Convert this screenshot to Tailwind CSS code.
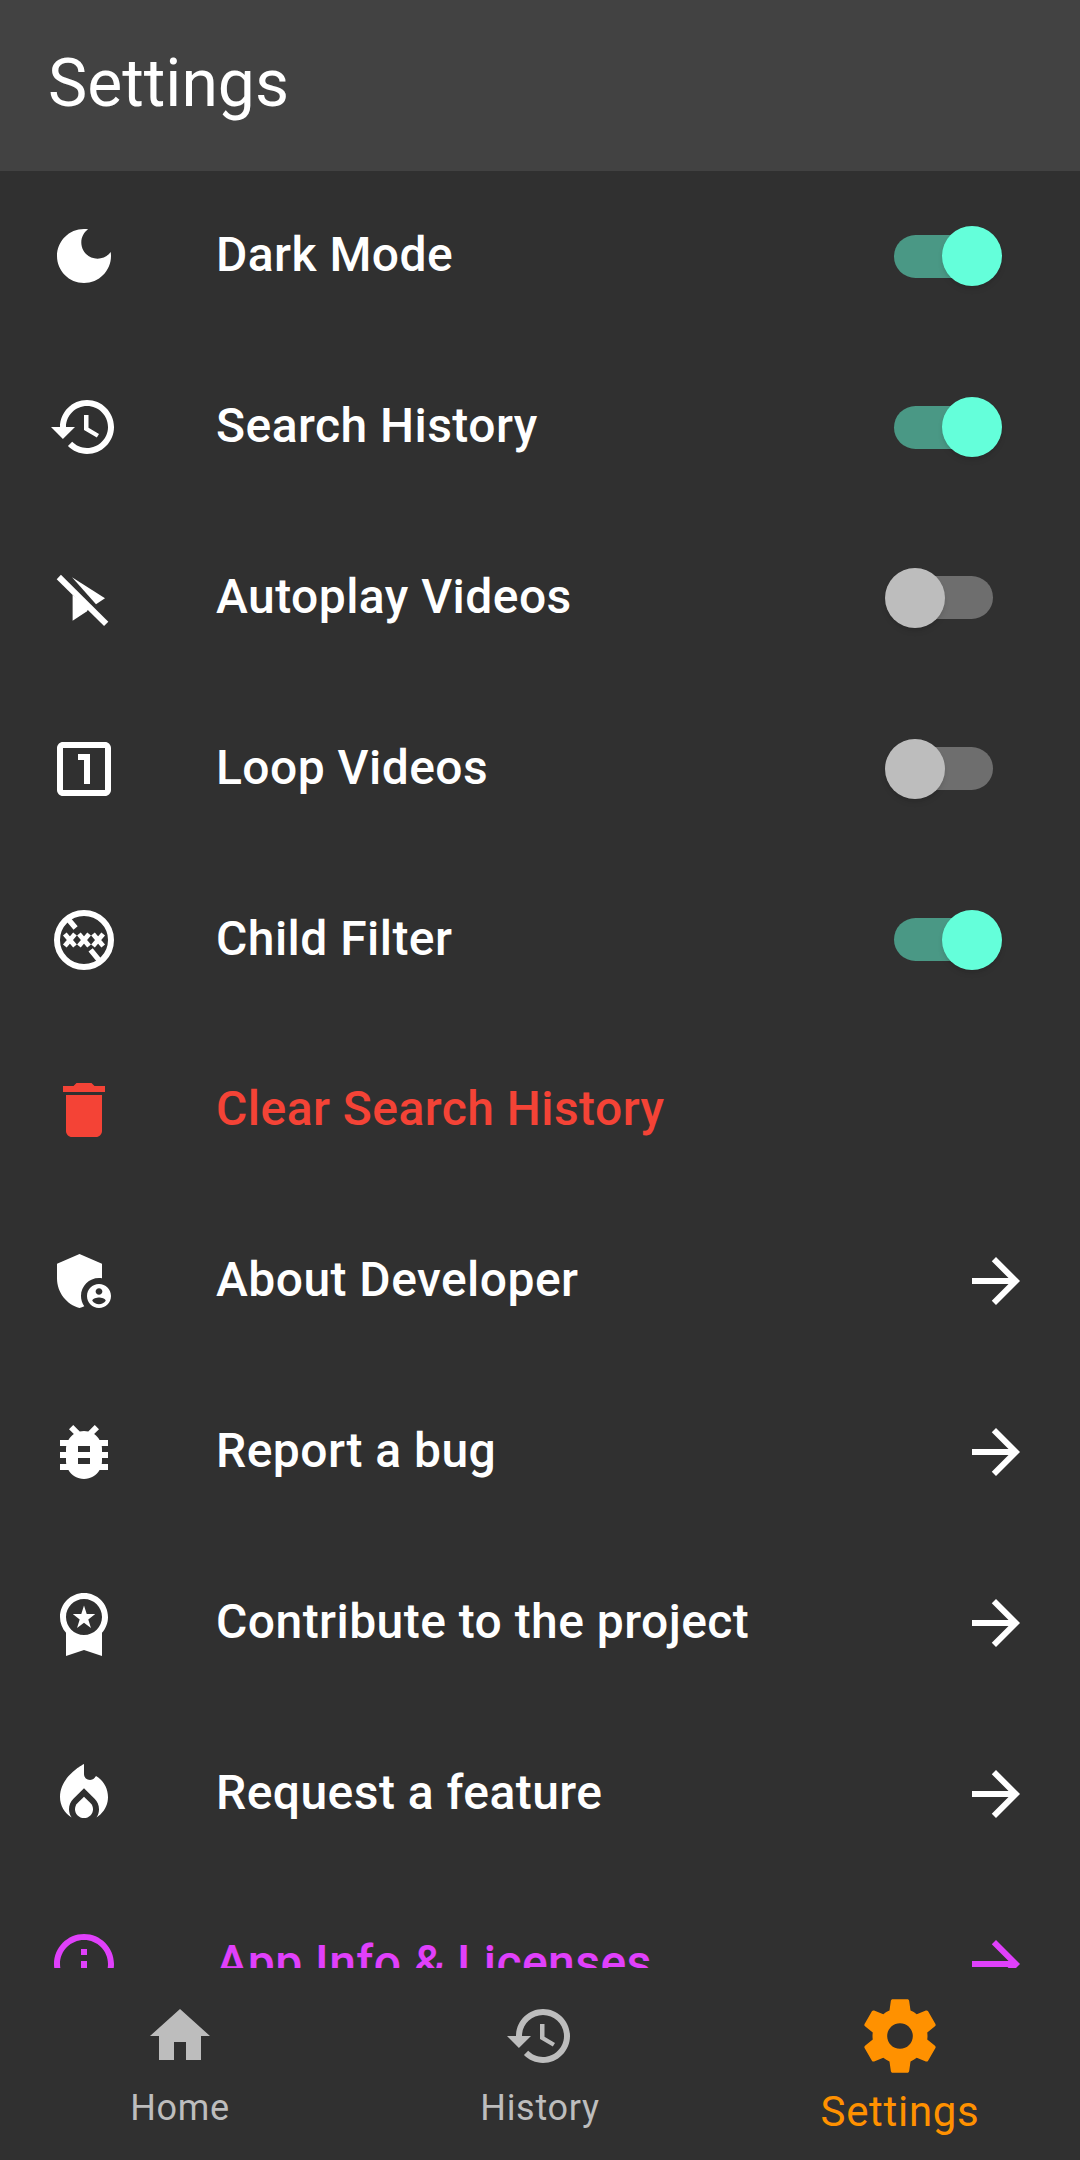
<!DOCTYPE html>
<html>
  <head>
    <meta charset="utf-8" />
    <title>Settings</title>
    <script src="https://cdn.jsdelivr.net/npm/@tailwindcss/browser@4"></script>
  </head>
  <body>
    <div class="w-[1080px] h-[2160px] flex flex-col bg-[#303030] overflow-hidden font-['Roboto',sans-serif] text-white">
      <header class="h-[171px] shrink-0 bg-[#424242] flex items-center pl-12">
        <h1 class="text-[66px] font-normal leading-none pb-[4px]">Settings</h1>
      </header>

      <main class="h-[1797px] shrink-0 overflow-hidden">
        <div class="h-[170.8px] flex items-center pl-12">
          <svg class="w-[72px] h-[72px] shrink-0" viewBox="0 0 24 24" fill="currentColor"><path d="M12 3c-4.97 0-9 4.03-9 9s4.03 9 9 9 9-4.03 9-9c0-.46-.04-.92-.1-1.36-.98 1.37-2.58 2.26-4.4 2.26-2.98 0-5.4-2.42-5.4-5.4 0-1.81.89-3.42 2.26-4.4-.44-.06-.9-.1-1.36-.1z"/></svg>
          <span class="ml-24 text-[48px] font-medium leading-none tracking-[0.45px] pb-[2px]">Dark Mode</span>
          <div class="relative ml-auto mr-[87px] w-[99px] h-[43px] rounded-full bg-[#64ffda]/50">
            <div class="absolute -right-[9px] -top-[8.5px] w-[60px] h-[60px] rounded-full bg-[#64ffda] shadow-md"></div>
          </div>
        </div>

        <div class="h-[170.8px] flex items-center pl-12">
          <svg class="w-[72px] h-[72px] shrink-0" viewBox="0 0 24 24" fill="currentColor"><path d="M13 3c-4.97 0-9 4.03-9 9H1l3.89 3.89.07.14L9 12H6c0-3.87 3.13-7 7-7s7 3.13 7 7-3.13 7-7 7c-1.93 0-3.68-.79-4.94-2.06l-1.42 1.42C8.27 19.99 10.51 21 13 21c4.97 0 9-4.03 9-9s-4.03-9-9-9zm-1 5v5l4.28 2.54.72-1.21-3.5-2.08V8H12z"/></svg>
          <span class="ml-24 text-[48px] font-medium leading-none tracking-[0.45px] pb-[2px]">Search History</span>
          <div class="relative ml-auto mr-[87px] w-[99px] h-[43px] rounded-full bg-[#64ffda]/50">
            <div class="absolute -right-[9px] -top-[8.5px] w-[60px] h-[60px] rounded-full bg-[#64ffda] shadow-md"></div>
          </div>
        </div>

        <div class="h-[170.8px] flex items-center pl-12">
          <svg class="w-[72px] h-[72px] shrink-0" viewBox="0 0 24 24" fill="currentColor"><path d="M8 5.1 19 12.1 16 14.1Z"/><path d="M8.2 10.9V19.6L12.9 16.5 13.7 15.4Z"/><path d="M3.6 5 19.4 20.6" stroke="currentColor" stroke-width="2" fill="none"/></svg>
          <span class="ml-24 text-[48px] font-medium leading-none tracking-[0.45px] pb-[2px]">Autoplay Videos</span>
          <div class="relative ml-auto mr-[87px] w-[99px] h-[43px] rounded-full bg-white/30">
            <div class="absolute -left-[9px] -top-[8.5px] w-[60px] h-[60px] rounded-full bg-[#bdbdbd] shadow-md"></div>
          </div>
        </div>

        <div class="h-[170.8px] flex items-center pl-12">
          <svg class="w-[72px] h-[72px] shrink-0" viewBox="0 0 24 24" fill="currentColor"><path d="M19 3H5c-1.1 0-2 .9-2 2v14c0 1.1.9 2 2 2h14c1.1 0 2-.9 2-2V5c0-1.1-.9-2-2-2zm0 16H5V5h14v14zM12 17h2V7h-4v2h2z"/></svg>
          <span class="ml-24 text-[48px] font-medium leading-none tracking-[0.45px] pb-[2px]">Loop Videos</span>
          <div class="relative ml-auto mr-[87px] w-[99px] h-[43px] rounded-full bg-white/30">
            <div class="absolute -left-[9px] -top-[8.5px] w-[60px] h-[60px] rounded-full bg-[#bdbdbd] shadow-md"></div>
          </div>
        </div>

        <div class="h-[170.8px] flex items-center pl-12">
          <svg class="w-[72px] h-[72px] shrink-0" viewBox="0 0 24 24" fill="none" stroke="currentColor"><circle cx="12" cy="12" r="9" stroke-width="2"/><path d="M6.4 4.7 9.2 8M14.2 15.3 17 18.7" stroke-width="1.8"/><path d="M5.6 10 9 14M9 10 5.6 14M10.3 10 13.7 14M13.7 10 10.3 14M15 10 18.4 14M18.4 10 15 14" stroke-width="1.6"/></svg>
          <span class="ml-24 text-[48px] font-medium leading-none tracking-[0.45px] pb-[2px]">Child Filter</span>
          <div class="relative ml-auto mr-[87px] w-[99px] h-[43px] rounded-full bg-[#64ffda]/50">
            <div class="absolute -right-[9px] -top-[8.5px] w-[60px] h-[60px] rounded-full bg-[#64ffda] shadow-md"></div>
          </div>
        </div>

        <div class="h-[170.8px] flex items-center pl-12 text-[#f44336]">
          <svg class="w-[72px] h-[72px] shrink-0" viewBox="0 0 24 24" fill="currentColor"><path d="M6 19c0 1.1.9 2 2 2h8c1.1 0 2-.9 2-2V7H6v12zM19 4h-3.5l-1-1h-5l-1 1H5v2h14V4z"/></svg>
          <span class="ml-24 text-[48px] font-medium leading-none tracking-[0.45px] pb-[2px]">Clear Search History</span>
        </div>

        <div class="h-[170.8px] flex items-center pl-12">
          <svg class="w-[72px] h-[72px] shrink-0" viewBox="0 0 24 24" fill="currentColor"><path d="M17 11c.34 0 .67.04 1 .09V6.27L10.5 3 3 6.27v4.91c0 4.54 3.2 8.79 7.5 9.82.55-.13 1.08-.32 1.6-.55-.69-.98-1.1-2.17-1.1-3.45 0-3.31 2.69-6 6-6z"/><path d="M17 13c-2.21 0-4 1.79-4 4s1.79 4 4 4 4-1.79 4-4-1.79-4-4-4zm0 1.38c.62 0 1.12.51 1.12 1.12s-.51 1.12-1.12 1.12-1.12-.51-1.12-1.12.5-1.12 1.12-1.12zm0 5.37c-.93 0-1.74-.46-2.24-1.17.05-.72 1.51-1.08 2.24-1.08s2.19.36 2.24 1.08c-.5.71-1.31 1.17-2.24 1.17z"/></svg>
          <span class="ml-24 text-[48px] font-medium leading-none tracking-[0.45px] pb-[2px]">About Developer</span>
          <svg class="ml-auto mr-12 w-[72px] h-[72px]" viewBox="0 0 24 24" fill="currentColor"><path d="M12 4l-1.41 1.41L16.17 11H4v2h12.17l-5.58 5.59L12 20l8-8z"/></svg>
        </div>

        <div class="h-[170.8px] flex items-center pl-12">
          <svg class="w-[72px] h-[72px] shrink-0" viewBox="0 0 24 24" fill="currentColor"><path d="M20 8h-2.81c-.45-.78-1.07-1.45-1.82-1.96L17 4.41 15.59 3l-2.17 2.17C12.96 5.06 12.49 5 12 5c-.49 0-.96.06-1.41.17L8.41 3 7 4.41l1.62 1.63C7.88 6.55 7.26 7.22 6.81 8H4v2h2.09c-.05.33-.09.66-.09 1v1H4v2h2v1c0 .34.04.67.09 1H4v2h2.81c1.04 1.79 2.97 3 5.19 3s4.15-1.21 5.19-3H20v-2h-2.09c.05-.33.09-.66.09-1v-1h2v-2h-2v-1c0-.34-.04-.67-.09-1H20V8zm-6 8h-4v-2h4v2zm0-4h-4v-2h4v2z"/></svg>
          <span class="ml-24 text-[48px] font-medium leading-none tracking-[0.45px] pb-[2px]">Report a bug</span>
          <svg class="ml-auto mr-12 w-[72px] h-[72px]" viewBox="0 0 24 24" fill="currentColor"><path d="M12 4l-1.41 1.41L16.17 11H4v2h12.17l-5.58 5.59L12 20l8-8z"/></svg>
        </div>

        <div class="h-[170.8px] flex items-center pl-12">
          <svg class="w-[72px] h-[72px] shrink-0" viewBox="0 0 24 24" fill="currentColor"><path d="M9.68 13.69 12 11.93l2.31 1.76-.88-2.85L15.75 9h-2.84L12 6.19 11.09 9H8.25l2.31 1.84-.88 2.85zM20 10c0-4.42-3.58-8-8-8s-8 3.58-8 8c0 2.03.76 3.87 2 5.28V23l6-2 6 2v-7.72c1.24-1.41 2-3.25 2-5.28zm-8-6c3.31 0 6 2.69 6 6s-2.69 6-6 6-6-2.69-6-6 2.69-6 6-6z"/></svg>
          <span class="ml-24 text-[48px] font-medium leading-none tracking-[0.45px] pb-[2px]">Contribute to the project</span>
          <svg class="ml-auto mr-12 w-[72px] h-[72px]" viewBox="0 0 24 24" fill="currentColor"><path d="M12 4l-1.41 1.41L16.17 11H4v2h12.17l-5.58 5.59L12 20l8-8z"/></svg>
        </div>

        <div class="h-[170.8px] flex items-center pl-12">
          <svg class="w-[72px] h-[72px] shrink-0" viewBox="0 0 24 24" fill="currentColor"><path d="M12 12.9l-2.13 2.09C9.31 15.55 9 16.28 9 17.06 9 18.68 10.35 20 12 20s3-1.32 3-2.94c0-.78-.31-1.52-.87-2.07L12 12.9z"/><path d="M16 6l-.44.55C14.38 8.02 12 7.19 12 5.3V2S4 6 4 13c0 2.92 1.56 5.47 3.89 6.86-.56-.79-.89-1.76-.89-2.8 0-1.32.52-2.56 1.47-3.5L12 10.1l3.53 3.47c.95.93 1.47 2.17 1.47 3.5 0 1.02-.31 1.96-.85 2.75 1.89-1.15 3.29-3.06 3.71-5.3.66-3.55-1.07-6.87-3.86-8.52z"/></svg>
          <span class="ml-24 text-[48px] font-medium leading-none tracking-[0.45px] pb-[2px]">Request a feature</span>
          <svg class="ml-auto mr-12 w-[72px] h-[72px]" viewBox="0 0 24 24" fill="currentColor"><path d="M12 4l-1.41 1.41L16.17 11H4v2h12.17l-5.58 5.59L12 20l8-8z"/></svg>
        </div>

        <div class="h-[170.8px] flex items-center pl-12 text-[#e040fb]">
          <svg class="w-[72px] h-[72px] shrink-0" viewBox="0 0 24 24" fill="currentColor"><path d="M11 7h2v2h-2zm0 4h2v6h-2zm1-9C6.48 2 2 6.48 2 12s4.48 10 10 10 10-4.48 10-10S17.52 2 12 2zm0 18c-4.41 0-8-3.59-8-8s3.59-8 8-8 8 3.59 8 8-3.59 8-8 8z"/></svg>
          <span class="ml-24 text-[48px] font-medium leading-none tracking-[0.45px] pb-[2px]">App Info &amp; Licenses</span>
          <svg class="ml-auto mr-12 w-[72px] h-[72px]" viewBox="0 0 24 24" fill="currentColor"><path d="M12 4l-1.41 1.41L16.17 11H4v2h12.17l-5.58 5.59L12 20l8-8z"/></svg>
        </div>
      </main>

      <nav class="h-[192px] shrink-0 grid grid-cols-3">
        <div class="flex flex-col items-center pt-[32px] text-[#bdbdbd]">
          <svg class="w-[72px] h-[72px]" viewBox="0 0 24 24" fill="currentColor"><path d="M10 20v-6h4v6h5v-8h3L12 3 2 12h3v8z"/></svg>
          <span class="mt-[12px] text-[36px] leading-[48px] tracking-[0.7px]">Home</span>
        </div>
        <div class="flex flex-col items-center pt-[32px] text-[#bdbdbd]">
          <svg class="w-[72px] h-[72px]" viewBox="0 0 24 24" fill="currentColor"><path d="M13 3c-4.97 0-9 4.03-9 9H1l3.89 3.89.07.14L9 12H6c0-3.87 3.13-7 7-7s7 3.13 7 7-3.13 7-7 7c-1.93 0-3.68-.79-4.94-2.06l-1.42 1.42C8.27 19.99 10.51 21 13 21c4.97 0 9-4.03 9-9s-4.03-9-9-9zm-1 5v5l4.28 2.54.72-1.21-3.5-2.08V8H12z"/></svg>
          <span class="mt-[12px] text-[36px] leading-[48px] tracking-[0.7px]">History</span>
        </div>
        <div class="flex flex-col items-center pt-[24px] text-[#ff9100]">
          <svg class="w-[88px] h-[88px]" viewBox="0 0 24 24" fill="currentColor"><path d="M19.43 12.98c.04-.32.07-.64.07-.98s-.03-.66-.07-.98l2.11-1.65c.19-.15.24-.42.12-.64l-2-3.46c-.12-.22-.39-.3-.61-.22l-2.49 1c-.52-.4-1.08-.73-1.69-.98l-.38-2.65C14.46 2.18 14.25 2 14 2h-4c-.25 0-.46.18-.49.42l-.38 2.65c-.61.25-1.17.59-1.69.98l-2.49-1c-.23-.09-.49 0-.61.22l-2 3.46c-.13.22-.07.49.12.64l2.11 1.65c-.04.32-.07.65-.07.98s.03.66.07.98l-2.11 1.65c-.19.15-.24.42-.12.64l2 3.46c.12.22.39.3.61.22l2.49-1c.52.4 1.08.73 1.69.98l.38 2.65c.03.24.24.42.49.42h4c.25 0 .46-.18.49-.42l.38-2.65c.61-.25 1.17-.59 1.69-.98l2.49 1c.23.09.49 0 .61-.22l2-3.46c.12-.22.07-.49-.12-.64l-2.11-1.65zM12 15.5c-1.93 0-3.5-1.57-3.5-3.5s1.57-3.5 3.5-3.5 3.5 1.57 3.5 3.5-1.57 3.5-3.5 3.5z"/></svg>
          <span class="mt-[8px] text-[42px] leading-[48px] tracking-[0.7px]">Settings</span>
        </div>
      </nav>
    </div>
  </body>
</html>
